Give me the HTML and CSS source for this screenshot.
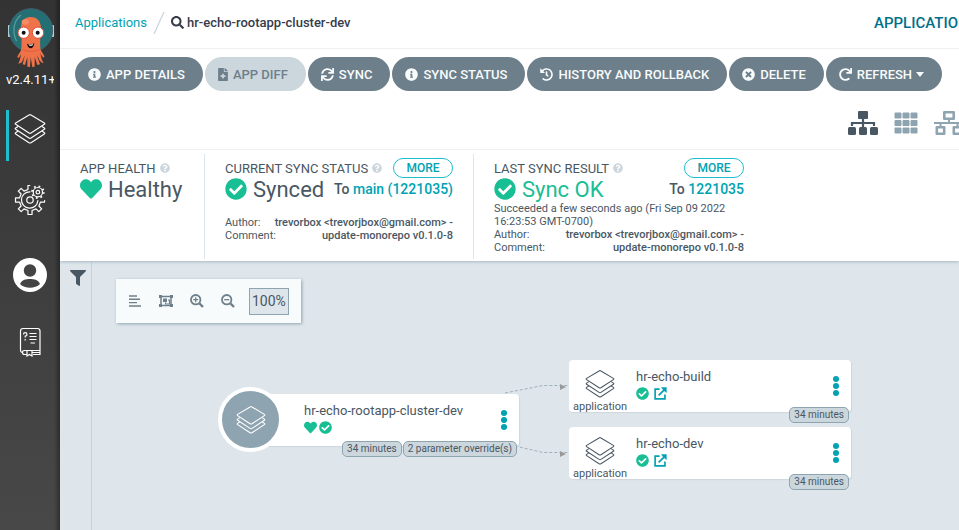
FILE: index.html
```html
<!DOCTYPE html>
<html lang="en">
<head>
<meta charset="utf-8">
<meta name="viewport" content="width=device-width, initial-scale=1">
<title>hr-echo-rootapp-cluster-dev</title>
<link rel="stylesheet" href="styles.css">
</head>
<body>
<svg class="sprite" aria-hidden="true">
  <symbol id="info" viewBox="0 0 512 512"><path d="M256 8C119.043 8 8 119.083 8 256c0 136.997 111.043 248 248 248s248-111.003 248-248C504 119.083 392.957 8 256 8zm0 110c23.196 0 42 18.804 42 42s-18.804 42-42 42-42-18.804-42-42 18.804-42 42-42zm56 254c0 6.627-5.373 12-12 12h-88c-6.627 0-12-5.373-12-12v-24c0-6.627 5.373-12 12-12h12v-64h-12c-6.627 0-12-5.373-12-12v-24c0-6.627 5.373-12 12-12h64c6.627 0 12 5.373 12 12v100h12c6.627 0 12 5.373 12 12v24z"/></symbol>
  <symbol id="check" viewBox="0 0 512 512"><path d="M504 256c0 136.967-111.033 248-248 248S8 392.967 8 256 119.033 8 256 8s248 111.033 248 248zM227.314 387.314l184-184c6.248-6.248 6.248-16.379 0-22.627l-22.627-22.627c-6.248-6.249-16.379-6.249-22.628 0L216 308.118l-70.059-70.059c-6.248-6.248-16.379-6.248-22.628 0l-22.627 22.627c-6.248 6.248-6.248 16.379 0 22.627l104 104c6.249 6.249 16.379 6.249 22.628.001z"/></symbol>
  <symbol id="heart" viewBox="0 0 512 512"><path d="M462.3 62.6C407.5 15.9 326 24.3 275.7 76.2L256 96.5l-19.7-20.3C186.1 24.3 104.5 15.9 49.7 62.6c-62.8 53.6-66.1 149.8-9.9 207.9l193.5 199.8c12.5 12.9 32.8 12.9 45.3 0l193.5-199.8c56.3-58.1 53-154.3-9.8-207.9z"/></symbol>
  <symbol id="times" viewBox="0 0 512 512"><path d="M256 8C119 8 8 119 8 256s111 248 248 248 248-111 248-248S393 8 256 8zm121.6 313.1c4.7 4.7 4.7 12.3 0 17L338 377.6c-4.7 4.7-12.3 4.7-17 0L256 312l-65.1 65.6c-4.7 4.7-12.3 4.7-17 0L134.4 338c-4.7-4.7-4.7-12.3 0-17l65.6-65-65.6-65.1c-4.7-4.7-4.7-12.3 0-17l39.6-39.6c4.7-4.7 12.3-4.7 17 0l65 65.7 65.1-65.6c4.7-4.7 12.3-4.7 17 0l39.6 39.6c4.7 4.7 4.7 12.3 0 17L312 256l65.6 65.1z"/></symbol>
  <symbol id="search" viewBox="0 0 512 512"><path d="M505 442.7L405.3 343c-4.5-4.5-10.6-7-17-7H372c27.6-35.3 44-79.7 44-128C416 93.1 322.9 0 208 0S0 93.1 0 208s93.1 208 208 208c48.3 0 92.7-16.4 128-44v16.3c0 6.4 2.5 12.5 7 17l99.7 99.7c9.4 9.4 24.6 9.4 33.9 0l28.3-28.3c9.4-9.4 9.4-24.6.1-34zM208 336c-70.7 0-128-57.2-128-128 0-70.7 57.2-128 128-128 70.7 0 128 57.2 128 128 0 70.7-57.2 128-128 128z"/></symbol>
  <symbol id="filter" viewBox="0 0 512 512"><path d="M487.976 0H24.028C2.71 0-8.047 25.866 7.058 40.971L192 225.941V432c0 7.831 3.821 15.17 10.237 19.662l80 55.98C298.02 518.69 320 507.493 320 487.98V225.941l184.947-184.97C520.021 25.896 509.338 0 487.976 0z"/></symbol>
  <symbol id="sync" viewBox="0 0 512 512"><path d="M440.65 12.57l4 82.77A247.16 247.16 0 0 0 255.83 8C134.73 8 33.91 94.92 12.29 209.82A12 12 0 0 0 24.09 224h49.05a12 12 0 0 0 11.67-9.26 175.91 175.91 0 0 1 317-56.94l-101.46-4.86a12 12 0 0 0-12.57 12v47.41a12 12 0 0 0 12 12H500a12 12 0 0 0 12-12V12a12 12 0 0 0-12-12h-47.37a12 12 0 0 0-11.98 12.57zM255.83 432a175.61 175.61 0 0 1-146-77.8l101.8 4.87a12 12 0 0 0 12.57-12v-47.4a12 12 0 0 0-12-12H12a12 12 0 0 0-12 12V500a12 12 0 0 0 12 12h47.35a12 12 0 0 0 12-12.6l-4.15-82.57A247.17 247.17 0 0 0 255.83 504c121.11 0 221.93-86.92 243.55-201.82a12 12 0 0 0-11.8-14.18h-49.05a12 12 0 0 0-11.67 9.26A175.86 175.86 0 0 1 255.83 432z"/></symbol>
  <symbol id="redo" viewBox="0 0 512 512"><path d="M500.33 0h-47.41a12 12 0 0 0-12 12.57l4 82.76A247.42 247.42 0 0 0 256 8C119.34 8 7.9 119.53 8 256.19 8.1 393.07 119.1 504 256 504a247.1 247.1 0 0 0 166.18-63.91 12 12 0 0 0 .48-17.43l-34-34a12 12 0 0 0-16.38-.55A176 176 0 1 1 402.1 157.8l-101.53-4.87a12 12 0 0 0-12.57 12v47.41a12 12 0 0 0 12 12h200.33a12 12 0 0 0 12-12V12a12 12 0 0 0-12-12z"/></symbol>
  <symbol id="history" viewBox="0 0 512 512"><path d="M504 255.531c.253 136.64-111.18 248.372-247.82 248.468-59.015.042-113.223-20.53-155.822-54.911-11.077-8.94-11.905-25.541-1.839-35.607l11.267-11.267c8.609-8.609 22.353-9.551 31.891-1.984C173.062 425.135 212.781 440 256 440c101.705 0 184-82.311 184-184 0-101.705-82.311-184-184-184-48.814 0-93.149 18.969-126.068 49.932l50.754 50.754c10.08 10.08 2.941 27.314-11.313 27.314H24c-8.837 0-16-7.163-16-16V38.627c0-14.254 17.234-21.393 27.314-11.314l49.372 49.372C129.209 34.136 189.552 8 256 8c136.81 0 247.747 110.78 248 247.531zm-180.912 78.784l9.823-12.63c8.138-10.463 6.253-25.542-4.21-33.679L288 256.349V152c0-13.255-10.745-24-24-24h-16c-13.255 0-24 10.745-24 24v135.651l65.409 50.874c10.463 8.137 25.541 6.253 33.679-4.21z"/></symbol>
  <symbol id="diff" viewBox="0 0 384 512"><path d="M377 105L279.1 7c-4.5-4.5-10.6-7-17-7H256v128h128v-6.1c0-6.3-2.5-12.4-7-16.9zm-153 31V0H24C10.7 0 0 10.7 0 24v464c0 13.3 10.7 24 24 24h336c13.3 0 24-10.7 24-24V160H248c-13.2 0-24-10.8-24-24zm64 160v48c0 4.4-3.6 8-8 8h-56v56c0 4.4-3.6 8-8 8h-48c-4.4 0-8-3.6-8-8v-56h-56c-4.4 0-8-3.6-8-8v-48c0-4.4 3.6-8 8-8h56v-56c0-4.4 3.6-8 8-8h48c4.4 0 8 3.6 8 8v56h56c4.4 0 8 3.6 8 8z"/></symbol>
  <symbol id="question" viewBox="0 0 512 512"><path d="M504 256c0 136.997-111.043 248-248 248S8 392.997 8 256C8 119.083 119.043 8 256 8s248 111.083 248 248zM262.655 90c-54.497 0-89.255 22.957-116.549 63.758-3.536 5.286-2.353 12.415 2.715 16.258l34.699 26.31c5.205 3.947 12.621 3.008 16.665-2.122 17.864-22.658 30.113-35.797 57.303-35.797 20.429 0 45.698 13.148 45.698 32.958 0 14.976-12.363 22.667-32.534 33.976C247.128 238.528 216 254.941 216 296v4c0 6.627 5.373 12 12 12h56c6.627 0 12-5.373 12-12v-1.333c0-28.462 83.186-29.647 83.186-106.667 0-58.002-60.165-102-116.531-102zM256 338c-25.365 0-46 20.635-46 46 0 25.364 20.635 46 46 46s46-20.636 46-46c0-25.365-20.635-46-46-46z"/></symbol>
  <symbol id="layers" viewBox="0 0 92 90"><g fill="none" stroke="currentColor" stroke-width="3.4" stroke-linejoin="round" stroke-linecap="round"><path d="M43 3Q46 1 49 3L89 27Q92 29 89 31L49 57Q46 59 43 57L3 31Q0 29 3 27Z"/><path d="M9 38L3 42Q0 44 3 46L43 72Q46 74 49 72L89 46Q92 44 89 42L83 38"/><path d="M9 52L3 56Q0 58 3 60L43 86Q46 88 49 86L89 60Q92 58 89 56L83 52"/></g></symbol>
  <symbol id="external" viewBox="0 0 14 14"><path d="M6 2.2H1.2v10.6h10.6V8M5 9L11 3" fill="none" stroke="currentColor" stroke-width="1.8"/><path d="M7.6.4H13.6V6.4L11.6 4.8 9.2 2.4Z"/></symbol>
  <symbol id="dots" viewBox="0 0 6 20"><circle cx="3" cy="3" r="3"/><circle cx="3" cy="10" r="3"/><circle cx="3" cy="17" r="3"/></symbol>
</svg>
<div class="app">
  <aside class="sidebar">
    <svg class="logo" viewBox="0 0 138 180" aria-label="Argo">
      <rect x="0" y="51" width="9" height="36" rx="2" fill="#b5d1dc"/><rect x="129" y="51" width="9" height="36" rx="2" fill="#b5d1dc"/>
      <circle cx="69" cy="67" r="65" fill="#236f73" stroke="#455f70" stroke-width="3"/>
      <path d="M38 22C15 41 13 72 25 98" fill="none" stroke="#5a9a9b" stroke-width="4" stroke-linecap="round"/>
      <path d="M68 27C47 27 38 43 39 62C40 82 42 93 40 119C39 139 38 154 31 167L40 164C45 158 46 148 50 143L44 169L51 171L58 146L58 176L66 177L68 147L73 177L80 176L80 147L88 171L96 169L87 143C94 150 95 164 107 165C98 151 98 138 97 120C95 99 98 82 99 61C99 41 88 27 68 27Z" fill="#ef7248"/>
      <path d="M42 128L31 146M96 128L106 145M47 136L42 154M91 136L97 155" fill="none" stroke="#ef7248" stroke-width="6" stroke-linecap="round"/>
      <path d="M45 125C60 132 79 132 94 125" fill="none" stroke="#e15d42" stroke-width="3"/>
      <ellipse cx="52" cy="42" rx="11" ry="8" fill="#f48d65"/>
      <circle cx="47" cy="74" r="17" fill="#fff" stroke="#e34d3a" stroke-width="3"/><circle cx="90" cy="74" r="17" fill="#fff" stroke="#e34d3a" stroke-width="3"/>
      <circle cx="47" cy="74" r="6" fill="#111"/><circle cx="89" cy="74" r="6" fill="#111"/>
      <path d="M57 107Q68 112 79 106Q77 120 69 121Q59 119 57 107Z" fill="#160c0c"/><path d="M61 109Q68 112 76 108L74 112Q68 115 63 112Z" fill="#fff"/>
    </svg>
    <div class="version">v2.4.11+</div>
    <nav class="nav">
      <a class="nav-link active" href="#" aria-label="Applications"><svg class="nav-icon"><use href="#layers"/></svg></a>
      <a class="nav-link" href="#" aria-label="Settings"><svg class="nav-icon" viewBox="0 0 84 84" fill="none" stroke="currentColor" stroke-width="3.4" stroke-linejoin="round" stroke-linecap="round"><path d="M83 44L82.600 47.700L71.400 47.700L66.900 58.800L74.700 66.700L66.700 74.700L58.800 66.900L47.700 71.400L47.700 82.600L36.300 82.600L36.300 71.400L25.200 66.900L17.300 74.700L9.300 66.700L17.100 58.800L12.600 47.700L1.400 47.700L1.400 36.300L12.600 36.300L17.100 25.200L9.300 17.300L17.300 9.300L25.200 17.100L36.300 12.600L36.300 1.400L41 1.400"/><path d="M42 19A23 23 0 1 0 64 44"/><circle cx="42" cy="42" r="9"/><circle cx="64" cy="20" r="13"/><circle cx="64" cy="20" r="16.500" stroke-width="5" stroke-dasharray="5 7.960" stroke-linecap="butt"/><circle cx="64" cy="20" r="5"/></svg></a>
      <a class="nav-link user" href="#" aria-label="User info"><svg class="nav-icon" viewBox="0 0 34 34"><circle cx="17" cy="17" r="17" fill="#fff"/><circle cx="17" cy="12.500" r="6.200" fill="#444"/><path d="M7 26C9 21.500 13 21 17 21S25 21.500 27 26C22 31 12 31 7 26Z" fill="#444"/></svg></a>
      <a class="nav-link" href="#" aria-label="Documentation"><svg class="nav-icon" viewBox="0 0 30 30" fill="none" stroke="currentColor" stroke-width="1.200"><path d="M22 23.500H9.500Q7.500 23.500 7.500 25.500Q7.500 27.500 9.500 27.500H12M18 27.500H25V23.500H20M7 25.500Q5.500 25 5.500 23V4Q5.500 1.500 8 1.500H22.500Q25 1.500 25 4V24M17 25.500H25"/><path d="M12 23.500V29L14.500 27.500L17 29V23.500Z"/><path d="M8.500 7.500Q8.500 5.700 10.200 5.700T12 7.500Q12 8.700 10.200 9.200V10.500M10.200 12V13.400M14.500 6.500H21.500M14.500 9.500H21.500M14.500 12.500H21.500M15.500 16H20"/></svg></a>
    </nav>
  </aside>
  <main class="main">
    <header class="topbar">
      <a class="crumb" href="#">Applications</a>
      <svg class="slash" viewBox="0 0 12 22"><path d="M1 22L11 0" stroke="#ccd6dd" stroke-width="1.300"/></svg>
      <svg class="search-icon"><use href="#search"/></svg>
      <span class="crumb-current">hr-echo-rootapp-cluster-dev</span>
      <span class="page-title">APPLICATION</span>
    </header>
    <div class="actions">
      <button class="btn"><svg class="icon"><use href="#info"/></svg>APP DETAILS</button>
      <button class="btn" disabled><svg class="icon narrow"><use href="#diff"/></svg>APP DIFF</button>
      <button class="btn"><svg class="icon"><use href="#sync"/></svg>SYNC</button>
      <button class="btn"><svg class="icon"><use href="#info"/></svg>SYNC STATUS</button>
      <button class="btn"><svg class="icon"><use href="#history"/></svg>HISTORY AND ROLLBACK</button>
      <button class="btn"><svg class="icon"><use href="#times"/></svg>DELETE</button>
      <button class="btn"><svg class="icon"><use href="#redo"/></svg>REFRESH<span class="caret"></span></button>
    </div>
    <div class="views">
      <button class="view current" aria-label="Tree"><svg viewBox="0 0 30 24"><rect x="10" y="0" width="10" height="8" rx="1"/><rect x="0" y="16" width="8" height="8" rx="1.500"/><rect x="11" y="16" width="8" height="8" rx="1.500"/><rect x="22" y="16" width="8" height="8" rx="1.500"/><path d="M4 15V12H26V15M15 8V16" fill="none" stroke="currentColor" stroke-width="2.200"/></svg></button>
      <button class="view pods" aria-label="Pods"><svg viewBox="0 0 24 24"><path d="M1 2h6v5h-6zM9 2h6v5h-6zM17 2h6v5h-6zM1 9.500h6v5h-6zM9 9.500h6v5h-6zM17 9.500h6v5h-6zM1 17h6v5h-6zM9 17h6v5h-6zM17 17h6v5h-6z" stroke="currentColor" stroke-linejoin="round"/></svg></button>
      <button class="view" aria-label="Network"><svg viewBox="0 0 30 24"><g fill="none" stroke="currentColor" stroke-width="2.600" stroke-linejoin="round"><path d="M10.300 1.300H19.700V7.700H10.300Z"/><path d="M2.800 16.300H10.200V22.700H2.800ZM19.800 16.300H27.200V22.700H19.800Z"/><path d="M0 12H30M15 8V12M6.500 12V16M23.500 12V16" stroke-width="2"/></g></svg></button>
    </div>
    <section class="status">
      <div class="stat health">
        <div class="stat-head">APP HEALTH<svg class="help"><use href="#question"/></svg></div>
        <div class="stat-value"><svg class="state"><use href="#heart"/></svg>Healthy</div>
      </div>
      <div class="stat sync">
        <div class="stat-head">CURRENT SYNC STATUS<svg class="help"><use href="#question"/></svg><button class="more">MORE</button></div>
        <div class="stat-value"><svg class="state"><use href="#check"/></svg>Synced<span class="target">To <a href="#">main (1221035)</a></span></div>
        <dl class="meta spaced"><div><dt>Author:</dt><dd>trevorbox &lt;trevorjbox@gmail.com&gt; -</dd></div><div><dt>Comment:</dt><dd>update-monorepo v0.1.0-8</dd></div></dl>
      </div>
      <div class="stat result">
        <div class="stat-head">LAST SYNC RESULT<svg class="help"><use href="#question"/></svg><button class="more">MORE</button></div>
        <div class="stat-value ok"><svg class="state"><use href="#check"/></svg>Sync OK<span class="target">To <a href="#">1221035</a></span></div>
        <p class="when">Succeeded a few seconds ago (Fri Sep 09 2022 16:23:53 GMT-0700)</p>
        <dl class="meta"><div><dt>Author:</dt><dd>trevorbox &lt;trevorjbox@gmail.com&gt; -</dd></div><div><dt>Comment:</dt><dd>update-monorepo v0.1.0-8</dd></div></dl>
      </div>
    </section>
    <section class="workspace">
      <div class="filters"><button class="filter-btn" aria-label="Filters"><svg><use href="#filter"/></svg></button></div>
      <div class="canvas">
        <div class="graph-tools">
          <button class="tool" aria-label="Compact"><svg viewBox="0 0 14 14"><path d="M1 2H9M1 5.300H12M1 8.600H9M1 12H13" stroke="currentColor" stroke-width="1.400"/></svg></button>
          <button class="tool" aria-label="Group"><svg viewBox="0 0 14 14"><path d="M2 2.500H12V11.500H2Z" fill="none" stroke="currentColor" stroke-width="1.500"/><path d="M0 1H3V4H0ZM11 1H14V4H11ZM0 10H3V13H0ZM11 10H14V13H11Z"/><path d="M4 4.500H8V8H4Z"/><path d="M9 6H10.500V10H6.500V8.500" fill="none" stroke="currentColor" stroke-width="1.200"/></svg></button>
          <button class="tool" aria-label="Zoom in"><svg viewBox="0 0 14 14" fill="none" stroke="currentColor"><circle cx="5.700" cy="5.700" r="4.700" stroke-width="1.800"/><path d="M9.500 9.500L13 13" stroke-width="2.400"/><path d="M3.200 5.700H8.200M5.700 3.200V8.200" stroke-width="1.300"/></svg></button>
          <button class="tool" aria-label="Zoom out"><svg viewBox="0 0 14 14" fill="none" stroke="currentColor"><circle cx="5.700" cy="5.700" r="4.700" stroke-width="1.800"/><path d="M9.500 9.500L13 13" stroke-width="2.400"/><path d="M3.200 5.700H8.200" stroke-width="1.300"/></svg></button>
          <span class="zoom-level">100%</span>
        </div>
        <svg class="edges" viewBox="0 0 480 200"><g fill="none" stroke="#9fb0ba" stroke-dasharray="3 2"><path d="M413 132L451 124.500H477M423 185L451 191.500H477"/></g><path d="M468 123L474 126L468 129ZM468 190L474 193L468 196Z" fill="#999"/></svg>
        <article class="node root">
          <div class="kind"><svg><use href="#layers"/></svg></div>
          <div class="node-body"><div class="node-name">hr-echo-rootapp-cluster-dev</div><div class="node-state"><svg><use href="#heart"/></svg><svg><use href="#check"/></svg></div></div>
          <button class="menu" aria-label="Menu"><svg><use href="#dots"/></svg></button>
          <div class="tags"><span>34 minutes</span><span>2 parameter override(s)</span></div>
        </article>
        <article class="node build">
          <div class="kind"><svg><use href="#layers"/></svg>application</div>
          <div class="node-body"><div class="node-name">hr-echo-build</div><div class="node-state wide"><svg><use href="#check"/></svg><a href="#" aria-label="Open"><svg><use href="#external"/></svg></a></div></div>
          <button class="menu" aria-label="Menu"><svg><use href="#dots"/></svg></button>
          <div class="tags"><span>34 minutes</span></div>
        </article>
        <article class="node dev">
          <div class="kind"><svg><use href="#layers"/></svg>application</div>
          <div class="node-body"><div class="node-name">hr-echo-dev</div><div class="node-state wide"><svg><use href="#check"/></svg><a href="#" aria-label="Open"><svg><use href="#external"/></svg></a></div></div>
          <button class="menu" aria-label="Menu"><svg><use href="#dots"/></svg></button>
          <div class="tags"><span>34 minutes</span></div>
        </article>
      </div>
    </section>
  </main>
</div>
</body>
</html>
```
FILE: styles.css
```css
* { box-sizing: border-box; }
body { margin: 0; font-family: Roboto, "Liberation Sans", sans-serif; color: #495763; background: #dee6eb; }
button { font: inherit; border: 0; background: none; padding: 0; color: inherit; }
a { color: #00a2b3; text-decoration: none; }
svg { display: block; flex: none; }
svg:not([fill]) { fill: currentColor; }
p, dl, dd { margin: 0; }
.sprite { position: absolute; width: 0; height: 0; }
.app { display: flex; min-height: 100vh; overflow: hidden; }

.sidebar { flex: 0 0 60px; min-width: 0; padding: 8px 6px; color: #fff; background: linear-gradient(90deg, transparent 54px, rgba(0, 0, 0, .35)), linear-gradient(#333, #484848); }
.logo { width: 46px; height: 60px; margin-left: 2px; }
.version { font-size: 13px; line-height: 24px; white-space: nowrap; overflow: hidden; }
.nav { display: flex; flex-direction: column; gap: 20px; margin: 18px -6px 0 0; }
.nav-link { height: 51px; padding: 4px 0 0 5px; border-left: 3px solid transparent; color: #fff; }
.nav-link.active { border-color: #1fbdd0; }
.nav-icon { width: 32px; height: 30px; }
.user { padding-top: 6px; }
.user .nav-icon { height: 34px; width: 34px; margin-left: -1px; }

.main { flex: 1; min-width: 0; display: flex; flex-direction: column; background: #fff; }
.topbar { display: flex; align-items: center; height: 49px; padding: 0 0 3px 15px; border-bottom: 1px solid #edf1f4; font-size: 13px; overflow: hidden; white-space: nowrap; }
.slash { width: 12px; height: 22px; margin: 0 6px; }
.search-icon { width: 13px; height: 13px; margin-right: 3px; color: #363c4a; }
.crumb-current { font-weight: 500; color: #363c4a; }
.page-title { flex: 0 0 85px; min-width: 0; margin-left: auto; font-size: 15px; font-weight: 500; color: #00708a; }

.actions { display: flex; gap: 2px; padding: 8px 15px; }
.btn { display: flex; align-items: center; height: 34px; padding: 0 18px 0 13px; border-radius: 17px; background: #6d7f8b; color: #f8fbfb; font-size: 13px; font-weight: 500; white-space: nowrap; }
.btn:disabled { background: #ccd6dd; color: #6d7f8b; }
.icon { width: 13px; height: 13px; margin-right: 5px; }
.narrow { width: 10px; }
.caret { margin-left: 4px; border: 4px solid transparent; border-top: 5px solid; border-bottom: 0; }
.views { display: flex; align-items: center; gap: 15px; height: 51px; justify-content: flex-end; padding-bottom: 2px; margin-right: -5px; border-bottom: 1px solid #edf1f4; color: #8fa4b1; }
.view svg { width: 30px; height: 24px; }
.view.pods svg { width: 26px; }
.view.current { color: #495763; }

.status { display: flex; padding: 4px 0 2px; min-height: 111px; position: relative; box-shadow: 0 1px 3px #a9b7c0; clip-path: inset(0 0 -6px 0); }
.stat { padding: 4px 20px 0; font-size: 13px; }
.stat + .stat { border-left: 1px solid #dee6eb; }
.health { flex: 0 0 144px; }
.sync { flex: 0 0 269px; }
.result { flex: 0 0 291px; }
.stat-head { display: flex; align-items: center; height: 20px; white-space: nowrap; }
.help { width: 10px; height: 10px; margin-left: 4px; color: #ccd6dd; }
.more { width: 60px; height: 20px; margin-left: auto; border: 1px solid #1fbdd0; border-radius: 10px; font-size: 12px; font-weight: 500; color: #00a2b3; }
.stat-value { display: flex; align-items: center; height: 22px; font-size: 22px; white-space: nowrap; }
.state { width: 22px; height: 22px; margin-right: 6px; color: #18be94; }
.ok { color: #18be94; }
.target { margin-left: auto; font-size: 14px; font-weight: 500; color: #495763; }
.when, .meta { font-size: 11px; line-height: 13px; }
.when { margin-top: 2px; }
.spaced { margin-top: 16px; }
.meta div { display: flex; justify-content: space-between; }
.meta dd { font-weight: 500; white-space: nowrap; }

.workspace { flex: 1; display: flex; min-height: 269px; background: #dee6eb; }
.filters { flex: 0 0 32px; padding: 9px 0 0 10px; border-right: 1px solid #c8d2d6; }
.filter-btn svg { width: 16px; height: 16px; }
.canvas { flex: 1; position: relative; padding: 18px 24px; }
.graph-tools { display: inline-flex; align-items: center; gap: 17px; height: 44px; padding: 0 12px; background: #f8fbfb; box-shadow: 1px 1px 3px #8fa4b1; color: #6d7f8b; }
.tool svg { width: 14px; height: 14px; }
.zoom-level { height: 27px; margin-left: -3px; padding: 0 2px; border: 1px solid #8fa4b1; background: #dee6eb; font-size: 14px; line-height: 25px; color: #495763; }

/* Graph nodes sit at their laid-out coordinates on the canvas. */
.edges { position: absolute; left: 0; top: 0; width: 480px; height: 200px; }
.node { position: absolute; display: flex; width: 282px; height: 52px; border-radius: 4px; background: #fff; box-shadow: 1px 1px 1px #ccd6dd; }
.root { left: 128px; top: 133px; width: 299px; border-radius: 26px 4px 4px 26px; }
.build { left: 477px; top: 99px; }
.dev { left: 477px; top: 166px; }
.kind { flex: 0 0 62px; display: flex; flex-direction: column; align-items: center; padding-top: 10px; font-size: 11px; line-height: 15px; }
.kind svg { width: 30px; height: 28px; margin-bottom: 1px; }
.root .kind { flex: 0 0 65px; height: 65px; margin: -7px 0 0 -2px; padding: 0; justify-content: center; border: 4px solid #fff; border-radius: 50%; background: #8fa4b1; color: #fff; }
.root .kind svg { margin: 0; }
.node-body { padding: 9px 0 0 5px; }
.root .node-body { padding-left: 21px; }
.node-name { font-size: 13px; line-height: 16px; }
.node-state { display: flex; gap: 2px; margin-top: 2px; color: #18be94; }
.node-state.wide { gap: 5px; }
.node-state svg { width: 13px; height: 13px; }
.menu { margin: 0 12px 0 auto; color: #00a2b3; }
.menu svg { width: 6px; height: 20px; }
.tags { position: absolute; right: 2px; bottom: -11px; display: flex; gap: 1px; }
.tags span { height: 16px; padding: 0 4px; border: 1px solid #8fa4b1; border-radius: 5px; background: #ccd6dd; font-size: 10px; line-height: 14px; white-space: nowrap; }
```
